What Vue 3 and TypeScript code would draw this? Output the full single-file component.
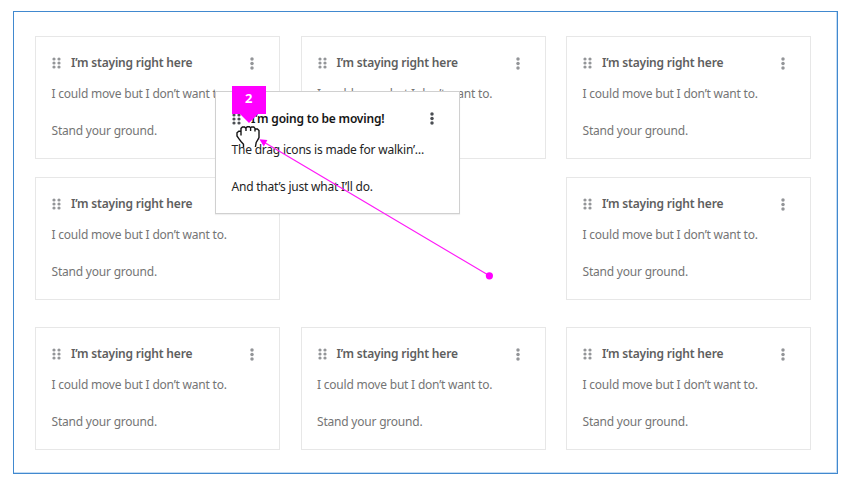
<script setup lang="ts">
interface Card {
  id: number
  title: string
  lines: string[]
}

const resting = { title: 'I’m staying right here', lines: ['I could move but I don’t want to.', 'Stand your ground.'] }
const cards: (Card | null)[] = Array.from({ length: 9 }, (_, i) => (i === 4 ? null : { id: i, ...resting }))

const moving: Card = {
  id: 4,
  title: 'I’m going to be moving!',
  lines: ['The drag icons is made for walkin’…', 'And that’s just what I’ll do.'],
}

const rows = [2, 6, 10]
</script>

<template>
  <main class="frame">
    <section class="grid">
      <template v-for="(card, i) in cards" :key="i">
        <article v-if="card" class="card">
          <header class="head">
            <svg class="grip" width="9" height="12" viewBox="0 0 9 12">
              <template v-for="y in rows" :key="y">
                <circle cx="2" :cy="y" r="1.6" />
                <circle cx="7" :cy="y" r="1.6" />
              </template>
            </svg>
            <h2 class="title">{{ card.title }}</h2>
            <svg class="kebab" width="4" height="13" viewBox="0 0 4 13">
              <circle cx="2" cy="2" r="1.75" />
              <circle cx="2" cy="6.5" r="1.75" />
              <circle cx="2" cy="11" r="1.75" />
            </svg>
          </header>
          <p v-for="line in card.lines" :key="line" class="line">{{ line }}</p>
        </article>
        <div v-else class="vacant"></div>
      </template>
    </section>

    <article class="card moving">
      <header class="head">
        <svg class="grip" width="9" height="12" viewBox="0 0 9 12">
          <template v-for="y in rows" :key="y">
            <circle cx="2" :cy="y" r="1.6" />
            <circle cx="7" :cy="y" r="1.6" />
          </template>
        </svg>
        <h2 class="title">{{ moving.title }}</h2>
        <svg class="kebab" width="4" height="13" viewBox="0 0 4 13">
          <circle cx="2" cy="2" r="1.75" />
          <circle cx="2" cy="6.5" r="1.75" />
          <circle cx="2" cy="11" r="1.75" />
        </svg>
      </header>
      <p v-for="line in moving.lines" :key="line" class="line">{{ line }}</p>
    </article>

    <svg class="overlay" width="850" height="486" viewBox="0 0 850 486">
      <path
        class="cursor"
        d="M243.5 147.5V144.2L241 141.5L239 138.8L237 136V132.8L238.8 131.2H241V135.4M241 131.2V128.4L242.4 127H244.6L246 128.4V131M246 128L247.2 126.7H249.4L250.6 127.8V131M250.6 127.8L251.6 127H253.8L255 128.4V131.4M255 129H257.4L259 130.6V137.6L257.6 140.2L256.2 142.4L255.4 147"
      />
      <path class="wire" d="M265 142.8L489.5 275.8" />
      <path class="pink" d="M259.4 139.3L267.4 140.1L263.8 146.4Z" />
      <circle class="pink" cx="489.4" cy="275.8" r="3.6" />
    </svg>

    <div class="pin">2</div>
  </main>
</template>

<style>
body {
  background: #fff;
}
</style>

<style scoped>
.frame {
  box-sizing: border-box;
  width: 825px;
  height: 463px;
  margin: 11px 0 0 13px;
  padding: 24px 0 0 21px;
  border: 1px solid #4189cf;
  box-shadow: inset -1px -1px 0 #c4dcf3;
  font-family: 'Noto Sans', sans-serif;
}

.grid {
  display: grid;
  grid-template-columns: repeat(3, 245px);
  grid-template-rows: 141px 150px 123px;
  column-gap: 20.5px;
  align-items: start;
}

.card {
  box-sizing: border-box;
  width: 245px;
  height: 123px;
  padding: 16px 15px 0 15.5px;
  border: 1px solid #e7e7e7;
  background: #fff;
  color: #757575;
}

.head {
  display: flex;
  align-items: center;
  height: 20px;
  padding: 0 10px 0 0.5px;
}

.grip,
.kebab {
  flex: none;
  fill: #939598;
}

.kebab {
  margin-left: auto;
}

.title {
  margin: 0 0 0 10px;
  color: #5e5e5e;
  font-size: 12px;
  font-weight: 600;
  line-height: 20px;
  letter-spacing: -0.2px;
  white-space: nowrap;
}

.line {
  margin: 11px 0 0;
  font-size: 12px;
  line-height: 20px;
  letter-spacing: -0.21px;
  white-space: nowrap;
}

.line + .line {
  margin-top: 17px;
}

.moving {
  position: absolute;
  left: 215px;
  top: 91px;
  padding-top: 17px;
  border-color: #d0d0d0;
  box-shadow: 0 1px 1px rgba(0, 0, 0, 0.06);
  color: #242424;
}

.moving .title {
  color: #151515;
}

.moving .grip,
.moving .kebab {
  position: relative;
  top: -0.5px;
  fill: #4b4e53;
}

.overlay {
  position: absolute;
  left: 0;
  top: 0;
}

.cursor {
  fill: none;
  stroke: #151515;
  stroke-width: 1.4;
  stroke-linejoin: miter;
}

.wire {
  stroke: #ff1af8;
  stroke-width: 1.15;
}

.pink {
  fill: #f0f;
}

.pin {
  position: absolute;
  left: 231.5px;
  top: 85.5px;
  width: 34.5px;
  height: 28.5px;
  background: #f0f;
  color: #fff;
  font-family: 'Open Sans', sans-serif;
  font-size: 13px;
  font-weight: 700;
  line-height: 25px;
  text-align: center;
}

.pin::after {
  content: '';
  position: absolute;
  left: 8px;
  top: 28px;
  border: 9px solid transparent;
  border-top-color: #f0f;
  border-bottom: 0;
}
</style>
